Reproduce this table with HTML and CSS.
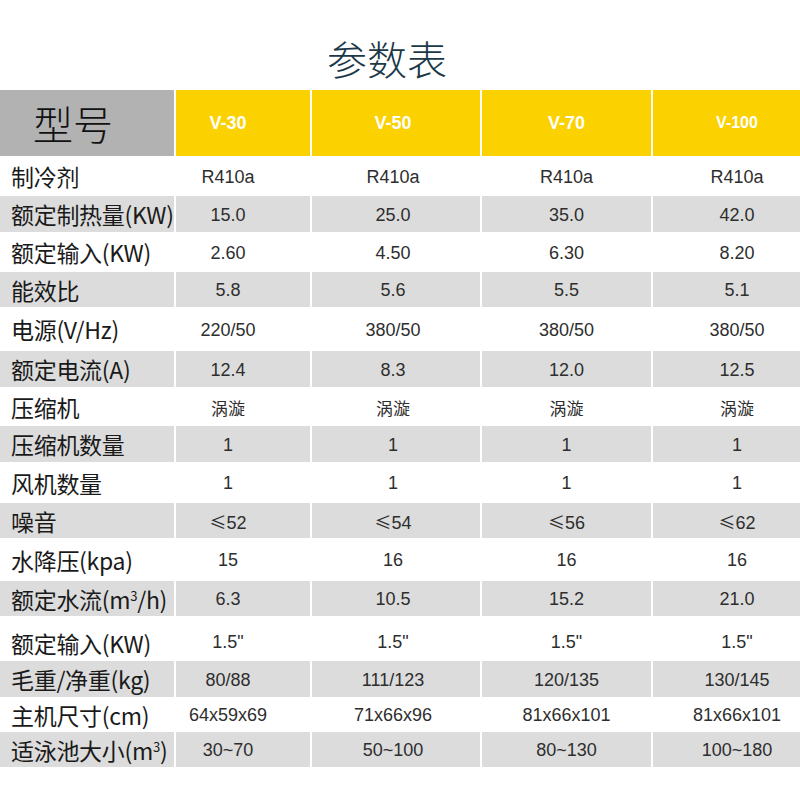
FILE: index.html
```html
<!DOCTYPE html>
<html lang="zh-CN">
<head>
<meta charset="utf-8">
<title>参数表</title>
<link rel="stylesheet" href="styles.css">
</head>
<body>
<h1 class="title">参数表</h1>
<div class="table">
  <div class="hcell hlabel">型号</div>
  <div class="hcell c1">V-30</div>
  <div class="hcell c2">V-50</div>
  <div class="hcell c3">V-70</div>
  <div class="hcell c4 small">V-100</div>

  <div class="lab"><span>制冷剂</span></div><div class="v c1">R410a</div><div class="v c2">R410a</div><div class="v c3">R410a</div><div class="v c4">R410a</div>
  <div class="lab g"><span>额定制热量(KW)</span></div><div class="v g c1">15.0</div><div class="v g c2">25.0</div><div class="v g c3">35.0</div><div class="v g c4">42.0</div>
  <div class="lab"><span>额定输入(KW)</span></div><div class="v c1">2.60</div><div class="v c2">4.50</div><div class="v c3">6.30</div><div class="v c4">8.20</div>
  <div class="lab g"><span>能效比</span></div><div class="v g c1">5.8</div><div class="v g c2">5.6</div><div class="v g c3">5.5</div><div class="v g c4">5.1</div>
  <div class="lab"><span>电源(V/Hz)</span></div><div class="v c1">220/50</div><div class="v c2">380/50</div><div class="v c3">380/50</div><div class="v c4">380/50</div>
  <div class="lab g"><span>额定电流(A)</span></div><div class="v g c1">12.4</div><div class="v g c2">8.3</div><div class="v g c3">12.0</div><div class="v g c4">12.5</div>
  <div class="lab"><span>压缩机</span></div><div class="v cjk c1">涡漩</div><div class="v cjk c2">涡漩</div><div class="v cjk c3">涡漩</div><div class="v cjk c4">涡漩</div>
  <div class="lab g"><span>压缩机数量</span></div><div class="v g c1">1</div><div class="v g c2">1</div><div class="v g c3">1</div><div class="v g c4">1</div>
  <div class="lab"><span>风机数量</span></div><div class="v c1">1</div><div class="v c2">1</div><div class="v c3">1</div><div class="v c4">1</div>
  <div class="lab g"><span>噪音</span></div><div class="v g c1"><span><span class="le">≤</span>52</span></div><div class="v g c2"><span><span class="le">≤</span>54</span></div><div class="v g c3"><span><span class="le">≤</span>56</span></div><div class="v g c4"><span><span class="le">≤</span>62</span></div>
  <div class="lab"><span>水降压(kpa)</span></div><div class="v c1">15</div><div class="v c2">16</div><div class="v c3">16</div><div class="v c4">16</div>
  <div class="lab g"><span>额定水流(m<sup>3</sup>/h)</span></div><div class="v g c1">6.3</div><div class="v g c2">10.5</div><div class="v g c3">15.2</div><div class="v g c4">21.0</div>
  <div class="lab low"><span>额定输入(KW)</span></div><div class="v low c1">1.5"</div><div class="v low c2">1.5"</div><div class="v low c3">1.5"</div><div class="v low c4">1.5"</div>
  <div class="lab g"><span>毛重/净重(kg)</span></div><div class="v g c1">80/88</div><div class="v g c2">111/123</div><div class="v g c3">120/135</div><div class="v g c4">130/145</div>
  <div class="lab"><span>主机尺寸(cm)</span></div><div class="v c1">64x59x69</div><div class="v c2">71x66x96</div><div class="v c3">81x66x101</div><div class="v c4">81x66x101</div>
  <div class="lab g"><span>适泳池大小(m<sup>3</sup>)</span></div><div class="v g c1">30~70</div><div class="v g c2">50~100</div><div class="v g c3">80~130</div><div class="v g c4">100~180</div>
</div>
</body>
</html>
```
FILE: styles.css
```css
html, body {
  margin: 0;
  padding: 0;
  background: #ffffff;
}

body {
  width: 800px;
  font-family: "Noto Sans CJK SC", sans-serif;
}

.title {
  margin: 0;
  height: 64px;
  padding: 26px 26px 0 0;
  line-height: 64px;
  text-align: center;
  font-size: 40px;
  font-weight: 300;
  color: #1b3848;
}

.table {
  display: grid;
  grid-template-columns: 174px 134px 168px 169px 147px;
  grid-template-rows: 66px 40px 36px 40px 35px 44px 36px 39px 36px 41px 35px 43px 35px 45px 36px 35px 35px;
  column-gap: 2px;
}

.hcell {
  display: flex;
  align-items: center;
  justify-content: center;
  background: #fcd100;
  color: #ffffff;
  font-family: "Liberation Sans", Arial, sans-serif;
  font-weight: bold;
  font-size: 18px;
}

.hcell.small {
  font-size: 16px;
}

.hlabel {
  justify-content: flex-start;
  padding-left: 33px;
  background: #b2b2b2;
  color: #111111;
  font-family: "Noto Sans CJK SC", sans-serif;
  font-weight: 300;
  font-size: 40px;
}

.lab {
  display: flex;
  align-items: center;
  padding-left: 11px;
  font-size: 23px;
  color: #1a1a1a;
  white-space: nowrap;
  letter-spacing: -0.3px;
}

.lab sup {
  font-size: 13px;
  line-height: 0;
  vertical-align: 8px;
}

.v {
  display: flex;
  align-items: center;
  justify-content: center;
  padding-top: 2px;
  font-family: "Liberation Sans", Arial, "Noto Sans CJK SC", sans-serif;
  font-size: 18px;
  color: #2e2e2e;
}

.v.cjk {
  font-family: "Noto Sans CJK SC", sans-serif;
  font-size: 17px;
}

.low {
  padding-top: 8px;
}

.le {
  font-family: "Noto Sans CJK SC", sans-serif;
  font-size: 17px;
}

.g {
  background: #dcdcdc;
}

.c1 { padding-right: 30px; }
.c2 { padding-right: 6px; }
.c4 { padding-left: 21px; }
```
